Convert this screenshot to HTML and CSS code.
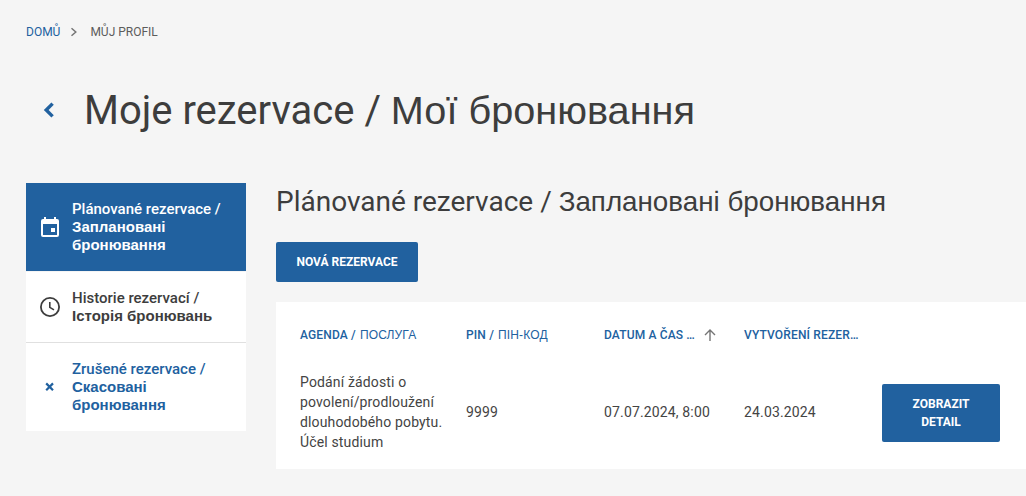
FILE: index.html
```html
<!DOCTYPE html>
<html lang="cs">
<head>
<meta charset="utf-8">
<title>Moje rezervace</title>
<link rel="stylesheet" href="styles.css">
</head>
<body>
<nav class="crumbs">
  <a class="crumb-link">DOMŮ</a>
  <svg class="crumb-sep" viewBox="0 0 8 10" width="8" height="10"><path d="M1.5 1.2 5.8 5 1.5 8.8" fill="none" stroke="#757575" stroke-width="1.5"/></svg>
  <span class="crumb-current">MŮJ PROFIL</span>
</nav>
<header class="page-head">
  <svg class="back" viewBox="0 0 12 16" width="12" height="16"><path d="M9.6 1.6 3.2 8l6.4 6.4" fill="none" stroke="#21619f" stroke-width="3.4"/></svg>
  <h1>Moje rezervace / <span class="cy">Мої бронювання</span></h1>
</header>
<div class="layout">
  <aside class="side">
    <div class="side-item active">
      <svg class="side-icon" viewBox="0 0 24 24" width="24" height="24"><path fill="#fff" d="M19 4h-1V2h-2v2H8V2H6v2H5a2 2 0 0 0-2 2v14a2 2 0 0 0 2 2h14a2 2 0 0 0 2-2V6a2 2 0 0 0-2-2zm0 16H5V9h14v11zm-6-7h4v4h-4z"/></svg>
      <span>Plánované rezervace / <span class="cy">Заплановані бронювання</span></span>
    </div>
    <div class="side-item plain">
      <svg class="side-icon" viewBox="0 0 24 24" width="24" height="24"><path fill="#3d3d3d" d="M12 2a10 10 0 1 0 0 20 10 10 0 0 0 0-20zm0 18.2a8.2 8.2 0 1 1 0-16.4 8.2 8.2 0 0 1 0 16.4z"/><path fill="none" stroke="#3d3d3d" stroke-width="1.6" d="M11.8 7v5.4l4.2 2.5"/></svg>
      <span>Historie rezervací / <span class="cy">Історія бронювань</span></span>
    </div>
    <div class="side-item cancelled">
      <svg class="side-icon" viewBox="0 0 24 24" width="24" height="24"><path fill="none" stroke="#21619f" stroke-width="2.2" d="M8.2 8.4l6.8 6.8M15 8.4l-6.8 6.8"/></svg>
      <span>Zrušené rezervace / <span class="cy">Скасовані бронювання</span></span>
    </div>
  </aside>
  <main class="main">
    <h2>Plánované rezervace / <span class="cy">Заплановані бронювання</span></h2>
    <button class="btn new">NOVÁ REZERVACE</button>
    <section class="card">
      <div class="grid">
        <div class="th"><b>AGENDA /</b> <span class="cy">ПОСЛУГА</span></div>
        <div class="th"><b>PIN /</b> <span class="cy">ПІН-КОД</span></div>
        <div class="th sort"><b>DATUM A ČAS …</b>
          <svg viewBox="0 0 14 14" width="14" height="14"><path d="M7 13V2M2 7l5-5 5 5" fill="none" stroke="#757575" stroke-width="1.4"/></svg>
        </div>
        <div class="th"><b>VYTVOŘENÍ REZER…</b></div>
        <div class="th"></div>
        <div class="td">Podání žádosti o povolení/prodloužení dlouhodobého pobytu. Účel studium</div>
        <div class="td">9999</div>
        <div class="td">07.07.2024, 8:00</div>
        <div class="td">24.03.2024</div>
        <div class="td"><button class="btn detail">ZOBRAZIT DETAIL</button></div>
      </div>
    </section>
  </main>
</div>
</body>
</html>
```

FILE: styles.css
```css
* { box-sizing: border-box; }
html, body { margin: 0; height: 100%; overflow: hidden; }
body {
  background: #f5f5f5;
  color: #3d3d3d;
  font-family: Roboto, "Liberation Sans", sans-serif;
  padding: 25px 0 0 26px;
  width: 1026px;
}
.cy { font-family: "Liberation Sans", Arial, sans-serif; }
.crumbs {
  display: flex;
  align-items: center;
  height: 14px;
  font-size: 12px;
  line-height: 14px;
}
.crumb-link { color: #21619f; }
.crumb-sep { margin: 0 12px 0 10px; }
.crumb-current { color: #5c5c5c; }
.page-head {
  display: flex;
  align-items: center;
  margin-top: 43px;
  height: 56px;
}
.back { margin-left: 17px; margin-right: 29px; }
h1 {
  margin: 0;
  font-size: 40px;
  font-weight: 400;
  line-height: 56px;
  color: #3d3d3d;
}
h1 .cy, h2 .cy { font-size: 0.992em; }
.layout {
  display: flex;
  gap: 30px;
  margin-top: 45px;
  align-items: flex-start;
}
.side {
  width: 220px;
  flex: none;
  background: #fff;
}
.side-item {
  display: flex;
  align-items: center;
  padding: 0 12px;
  font-size: 15px;
  font-weight: 500;
  line-height: 18px;
}
.side-item .cy { font-weight: 700; }
.side-icon { flex: none; margin-right: 10px; }
.active { background: #21619f; color: #fff; height: 88px; }
.plain { height: 72px; border-bottom: 1px solid #e0e0e0; border-top: 1px solid #f5f5f5; }
.cancelled { color: #21619f; height: 88px; }
.main { width: 750px; flex: none; }
h2 {
  margin: 0;
  font-size: 28px;
  font-weight: 400;
  line-height: 38px;
  color: #3d3d3d;
}
.btn {
  border: 0;
  border-radius: 2px;
  background: #21619f;
  color: #fff;
  font-family: inherit;
  font-size: 12px;
  font-weight: 700;
  line-height: 18px;
  display: block;
}
.new { width: 142px; height: 40px; margin-top: 21px; }
.card { background: #fff; margin-top: 20px; height: 167px; padding-left: 24px; }
.grid {
  display: grid;
  grid-template-columns: 166px 138px 140px 138px 118px;
  grid-template-rows: 65px 92px;
  align-items: center;
}
.th {
  font-size: 12px;
  color: #21619f;
  line-height: 14px;
  letter-spacing: 0.15px;
  display: flex;
  align-items: center;
  gap: 4px;
  white-space: nowrap;
}
.th b { font-weight: 500; }
.th.sort { gap: 8px; }
.td {
  font-size: 14px;
  line-height: 20px;
  letter-spacing: 0.15px;
  color: #444;
  padding: 0 16px 2px 0;
}
.td:nth-child(6) { padding-right: 20px; }
.grid .td:last-child { padding: 0; }
.detail { width: 118px; height: 58px; padding: 0 20px; }
```
